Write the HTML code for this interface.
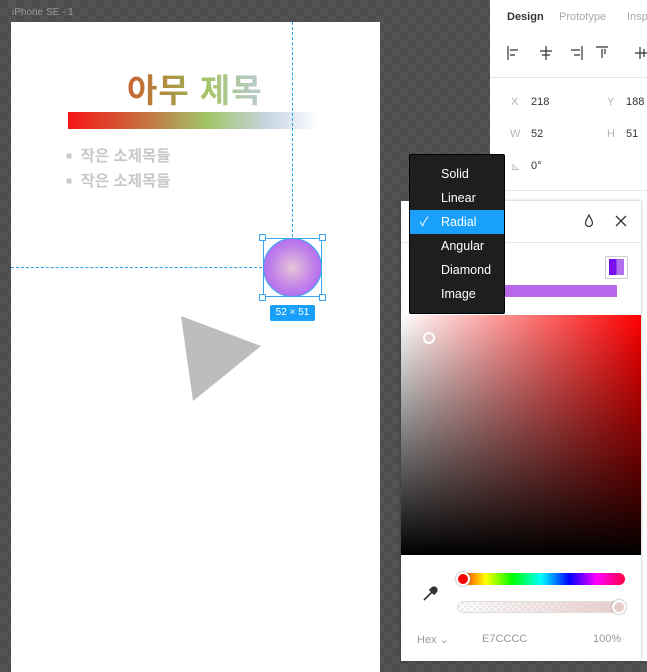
<!DOCTYPE html>
<html><head><meta charset="utf-8"><style>
*{margin:0;padding:0;box-sizing:border-box}
body{width:647px;height:661px;overflow:hidden;position:relative;font-family:"Liberation Sans","Noto Sans CJK KR",sans-serif;
background:repeating-conic-gradient(#545454 0 25%,#4c4c4c 0 50%) 0 0/16px 16px}
.a{position:absolute}
.frame{left:11px;top:22px;width:369px;height:650px;background:#fff}
.menu div{height:24px;line-height:24px;padding-left:31px;color:#fff;font-size:12.5px;position:relative}
.t{color:#b3b3b3;font-size:11px}
.v{color:#333;font-size:11px}
</style></head><body>
<div class="a" style="left:12px;top:7px;color:#999;font-size:10px">iPhone SE - 1</div>
<div class="a frame"></div>
<div class="a" style="left:127px;top:64px;font-size:33px;font-weight:bold;letter-spacing:1px;background:linear-gradient(90deg,#c8622e,#a7a04a 40%,#a5c66a 60%,#b9cbd8);-webkit-background-clip:text;color:transparent">아무 제목</div>
<div class="a" style="left:68px;top:112px;width:252px;height:17px;background:linear-gradient(90deg,#f51515,#c87040 30%,#a0c466 55%,#c8d6e6 80%,#fff)"></div>
<div class="a" style="left:66px;top:144px;color:#c8c8c8;font-size:15.5px;font-weight:bold;line-height:25px"><span style="font-size:10px;vertical-align:2px">■</span>&nbsp; 작은 소제목들<br><span style="font-size:10px;vertical-align:2px">■</span>&nbsp; 작은 소제목들</div>
<div class="a" style="left:292px;top:22px;height:215px;border-left:1px dashed #2aa0f0"></div>
<div class="a" style="left:11px;top:267px;width:251px;border-top:1px dashed #2aa0f0"></div>
<div class="a" style="left:263px;top:238px;width:59px;height:59px;border:1px solid #3aa5f5"></div>
<div class="a" style="left:263px;top:238px;width:59px;height:59px;border-radius:50%;border:1px solid #3aa5f5;background:radial-gradient(circle,#e8c6d6 0,#c283e9 50%,#a05af5 100%)"></div>
<div class="a" style="left:259px;top:234px;width:7px;height:7px;background:#fff;border:1px solid #3aa5f5"></div>
<div class="a" style="left:319px;top:234px;width:7px;height:7px;background:#fff;border:1px solid #3aa5f5"></div>
<div class="a" style="left:259px;top:294px;width:7px;height:7px;background:#fff;border:1px solid #3aa5f5"></div>
<div class="a" style="left:319px;top:294px;width:7px;height:7px;background:#fff;border:1px solid #3aa5f5"></div>
<div class="a" style="left:270px;top:305px;width:45px;height:16px;background:#18a0fb;color:#fff;font-size:10px;text-align:center;line-height:16px;border-radius:2px">52 × 51</div>
<svg class="a" style="left:178px;top:316px" width="84" height="86"><polygon points="3,0 83,30 15,85" fill="#bdbdbd"/></svg>

<div class="a" style="left:490px;top:0;width:157px;height:661px;background:#fff"></div>
<div class="a" style="left:507px;top:11px;font-size:11px;color:#333;font-weight:bold">Design</div>
<div class="a" style="left:559px;top:11px;font-size:11px;color:#aaa">Prototype</div>
<div class="a" style="left:627px;top:11px;font-size:11px;color:#aaa">Insp</div>
<svg class="a" style="left:505px;top:44px" width="142" height="18" stroke="#333" stroke-width="1.2" fill="none">
<path d="M3 2v14M5 6h8M5 11h5"/><path d="M41 2v14M35 7h12M37 11h8"/><path d="M77 2v14M66 6h9M69 11h6"/><path d="M91 3h12M97 5v9M100 5v5"/><path d="M135 3v12M130 9h12M139 5v8"/></svg>
<div class="a" style="left:490px;top:77px;width:157px;border-top:1px solid #e5e5e5"></div>
<div class="a t" style="left:511px;top:96px">X</div><div class="a v" style="left:531px;top:96px">218</div>
<div class="a t" style="left:607px;top:96px">Y</div><div class="a v" style="left:626px;top:96px">188</div>
<div class="a t" style="left:510px;top:128px">W</div><div class="a v" style="left:531px;top:128px">52</div>
<div class="a t" style="left:607px;top:128px">H</div><div class="a v" style="left:626px;top:128px">51</div>
<div class="a t" style="left:511px;top:160px">⊾</div><div class="a v" style="left:531px;top:160px">0°</div>
<div class="a" style="left:490px;top:190px;width:157px;border-top:1px solid #e5e5e5"></div>

<div class="a" style="left:401px;top:201px;width:240px;height:460px;background:#fff;box-shadow:0 0 3px rgba(0,0,0,.3)"></div>
<svg class="a" style="left:583px;top:214px" width="12" height="14"><path d="M6 1C4 5 2.5 7 2.5 9a3.5 3.5 0 0 0 7 0C9.5 7 8 5 6 1z" stroke="#333" stroke-width="1.2" fill="none"/></svg>
<svg class="a" style="left:615px;top:215px" width="12" height="12"><path d="M1 1L11 11M11 1L1 11" stroke="#333" stroke-width="1.3"/></svg>
<div class="a" style="left:401px;top:242px;width:240px;border-top:1px solid #e5e5e5"></div>
<div class="a" style="left:605px;top:256px;width:23px;height:23px;border:1px solid #ccc;border-radius:2px;background:#fff"></div>
<div class="a" style="left:609px;top:259px;width:15px;height:16px;background:linear-gradient(90deg,#7a10f0 50%,#b070f0 50%)"></div>
<div class="a" style="left:490px;top:285px;width:127px;height:12px;background:#b768ea"></div>
<div class="a" style="left:401px;top:315px;width:240px;height:240px;background:linear-gradient(to top,#000,rgba(0,0,0,0)),linear-gradient(90deg,#fff,#f00)"></div>
<div class="a" style="left:423px;top:332px;width:12px;height:12px;border:2px solid #fff;border-radius:50%;background:#e7cccc"></div>
<div class="a" style="left:457px;top:573px;width:168px;height:12px;border-radius:6px;background:linear-gradient(90deg,#f00,#ff0 17%,#0f0 33%,#0ff 50%,#00f 67%,#f0f 83%,#f04)"></div>
<div class="a" style="left:456px;top:572px;width:14px;height:14px;border:2px solid #fff;border-radius:50%;background:#f00;box-shadow:0 0 2px #888"></div>
<div class="a" style="left:457px;top:601px;width:168px;height:12px;border-radius:6px;border:1px solid #ddd;background:linear-gradient(90deg,rgba(231,204,204,0),#e7cccc),repeating-conic-gradient(#eee 0 25%,#fff 0 50%) 0 0/6px 6px"></div>
<div class="a" style="left:612px;top:600px;width:14px;height:14px;border:2px solid #fff;border-radius:50%;background:#e7cccc;box-shadow:0 0 2px #888"></div>
<svg class="a" style="left:421px;top:585px" width="18" height="18"><path d="M3 15L11 7M9 5l4 4M11 3a2 2 0 0 1 4 4l-2 2-4-4z" stroke="#333" stroke-width="1.6" fill="#333"/></svg>
<div class="a" style="left:417px;top:633px;font-size:11px;color:#999">Hex ⌄</div>
<div class="a" style="left:482px;top:633px;font-size:11px;color:#999">E7CCCC</div>
<div class="a" style="left:593px;top:633px;font-size:11px;color:#999">100%</div>

<div class="a menu" style="left:409px;top:154px;width:96px;height:160px;background:#1e1e1e;border:1px solid #000;border-radius:2px;padding-top:7px">
<div>Solid</div><div>Linear</div><div style="background:#18a0fb">Radial<span style="position:absolute;left:10px">✓</span></div><div>Angular</div><div>Diamond</div><div>Image</div>
</div>
</body></html>
